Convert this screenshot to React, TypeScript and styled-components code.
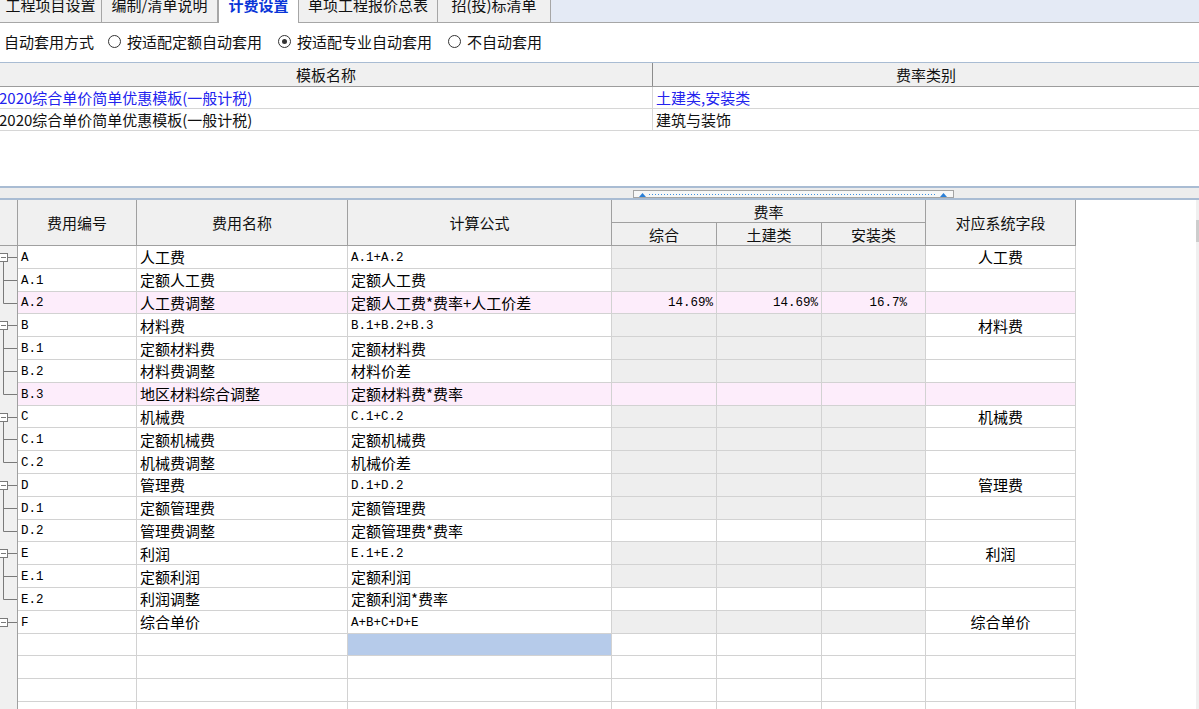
import React from 'react'
import styled, { createGlobalStyle } from 'styled-components'

const GlobalStyle = createGlobalStyle`
  html, body {
    margin: 0;
    padding: 0;
    background: #ffffff;
    overflow: hidden;
  }
  body {
    font-family: "Noto Sans CJK SC", "Liberation Sans", sans-serif;
    font-size: 15px;
    color: #000;
  }
`

const MONO = '"Liberation Mono", "Noto Sans CJK SC", monospace'

type TreeKind = 'parent' | 'leaf' | 'child' | 'last' | 'none'

interface IRow {
  code: string
  name: string
  formula: string
  rates?: [string, string, string]
  field?: string
  tree: TreeKind
  tone: 'gray' | 'pink' | 'white'
}

const rows: IRow[] = [
  { code: 'A', name: '人工费', formula: 'A.1+A.2', field: '人工费', tree: 'parent', tone: 'gray' },
  { code: 'A.1', name: '定额人工费', formula: '定额人工费', tree: 'child', tone: 'gray' },
  {
    code: 'A.2',
    name: '人工费调整',
    formula: '定额人工费*费率+人工价差',
    rates: ['14.69%', '14.69%', '16.7%  '],
    tree: 'last',
    tone: 'pink'
  },
  { code: 'B', name: '材料费', formula: 'B.1+B.2+B.3', field: '材料费', tree: 'parent', tone: 'gray' },
  { code: 'B.1', name: '定额材料费', formula: '定额材料费', tree: 'child', tone: 'gray' },
  { code: 'B.2', name: '材料费调整', formula: '材料价差', tree: 'child', tone: 'gray' },
  { code: 'B.3', name: '地区材料综合调整', formula: '定额材料费*费率', tree: 'last', tone: 'pink' },
  { code: 'C', name: '机械费', formula: 'C.1+C.2', field: '机械费', tree: 'parent', tone: 'gray' },
  { code: 'C.1', name: '定额机械费', formula: '定额机械费', tree: 'child', tone: 'gray' },
  { code: 'C.2', name: '机械费调整', formula: '机械价差', tree: 'last', tone: 'gray' },
  { code: 'D', name: '管理费', formula: 'D.1+D.2', field: '管理费', tree: 'parent', tone: 'gray' },
  { code: 'D.1', name: '定额管理费', formula: '定额管理费', tree: 'child', tone: 'gray' },
  { code: 'D.2', name: '管理费调整', formula: '定额管理费*费率', tree: 'last', tone: 'white' },
  { code: 'E', name: '利润', formula: 'E.1+E.2', field: '利润', tree: 'parent', tone: 'gray' },
  { code: 'E.1', name: '定额利润', formula: '定额利润', tree: 'child', tone: 'gray' },
  { code: 'E.2', name: '利润调整', formula: '定额利润*费率', tree: 'last', tone: 'white' },
  { code: 'F', name: '综合单价', formula: 'A+B+C+D+E', field: '综合单价', tree: 'leaf', tone: 'gray' }
]

const isAscii = (s: string) => /^[\x20-\x7e]*$/.test(s)

const COLS = '18px 119px 211px 264px 105px 105px 104px 150px'

const Page = styled.div`
  width: 1199px;
  height: 709px;
  display: flex;
  flex-direction: column;
  overflow: hidden;
`

const TabBar = styled.div`
  height: 22px;
  flex-shrink: 0;
  display: flex;
  background: #e4eaf5;
  border-bottom: 1px solid #a6a6a6;
`

const Tab = styled.div<{ $w: number; $active?: boolean }>`
  width: ${p => p.$w}px;
  height: ${p => (p.$active ? 23 : 22)}px;
  margin-bottom: ${p => (p.$active ? -1 : 0)}px;
  box-sizing: border-box;
  overflow: hidden;
  background: ${p => (p.$active ? '#ffffff' : '#f0f0f0')};
  border-right: 1px solid #a6a6a6;
  border-left: ${p => (p.$active ? '1px solid #a6a6a6' : 'none')};
  text-align: center;
  font-size: 15px;
  line-height: 16px;
  color: ${p => (p.$active ? '#0a36d8' : '#111')};
  font-weight: ${p => (p.$active ? 700 : 400)};
  span {
    display: block;
    margin-top: -3px;
  }
`

const ModeRow = styled.div`
  height: 39px;
  flex-shrink: 0;
  display: flex;
  align-items: center;
  padding-left: 4px;
  padding-bottom: 2px;
  box-sizing: border-box;
  font-size: 15px;
  color: #111;
`

const ModeLabel = styled.span`
  margin-right: 14px;
`

const Radio = styled.label`
  display: flex;
  align-items: center;
  margin-right: 16px;
`

const RadioDot = styled.span<{ $on?: boolean }>`
  width: 13px;
  height: 13px;
  box-sizing: border-box;
  border: 1px solid #333;
  border-radius: 50%;
  background: #fff;
  margin-right: 6px;
  display: flex;
  align-items: center;
  justify-content: center;
  &::after {
    content: '';
    width: 5px;
    height: 5px;
    border-radius: 50%;
    background: ${p => (p.$on ? '#333' : 'transparent')};
  }
`

const TemplatePanel = styled.div`
  height: 123px;
  flex-shrink: 0;
  border-top: 1px solid #a9bcd3;
  background: #fff;
`

const TemplateRow = styled.div<{ $head?: boolean }>`
  display: grid;
  grid-template-columns: 653px 1fr;
  height: ${p => (p.$head ? 24 : 22)}px;
  box-sizing: border-box;
  background: ${p => (p.$head ? '#f0f0f0' : '#fff')};
  border-bottom: 1px solid ${p => (p.$head ? '#9c9c9c' : '#d6d6d6')};
`

const TemplateCell = styled.div<{ $head?: boolean; $blue?: boolean; $pad?: number }>`
  display: flex;
  align-items: center;
  justify-content: ${p => (p.$head ? 'center' : 'flex-start')};
  padding-left: ${p => p.$pad ?? 0}px;
  box-sizing: border-box;
  white-space: nowrap;
  overflow: hidden;
  color: ${p => (p.$blue ? '#2323ee' : '#111')};
  &:first-child {
    border-right: 1px solid ${p => (p.$head ? '#8c8c8c' : '#d6d6d6')};
    margin-left: ${p => (p.$head ? 0 : -1)}px;
  }
`

const Splitter = styled.div`
  height: 14px;
  flex-shrink: 0;
  box-sizing: border-box;
  background: #ededed;
  border-top: 2px solid #a9bcd3;
  border-bottom: 2px solid #a9bcd3;
  display: flex;
  align-items: flex-end;
  padding-left: 633px;
`

const Lower = styled.div`
  flex: 1;
  display: flex;
  min-height: 0;
`

const Grid = styled.div`
  width: 1076px;
  display: flex;
  flex-direction: column;
`

const Spacer = styled.div`
  flex: 1;
`

const ScrollTrack = styled.div`
  width: 3px;
  background: #f0f0f0;
  padding-top: 20px;
  &::before {
    content: '';
    display: block;
    height: 22px;
    background: #cdcdcd;
  }
`

const HeadGrid = styled.div`
  display: grid;
  grid-template-columns: ${COLS};
  grid-template-rows: 23px 23px;
  background: #f0f0f0;
`

const HeadCell = styled.div<{ $col: string; $row: string }>`
  grid-column: ${p => p.$col};
  grid-row: ${p => p.$row};
  display: flex;
  align-items: center;
  justify-content: center;
  border-right: 1px solid #a0a0a0;
  border-bottom: 1px solid #a0a0a0;
  color: #111;
  white-space: nowrap;
`

const DataRow = styled.div`
  display: grid;
  grid-template-columns: ${COLS};
  height: 22.8px;
  flex-shrink: 0;
`

const TreeCell = styled.div`
  background: #f0f0f0;
  border-right: 1px solid #a0a0a0;
  overflow: hidden;
`

const Cell = styled.div<{ $bg: string; $align?: 'left' | 'right' | 'center'; $mono?: boolean }>`
  background: ${p => p.$bg};
  border-right: 1px solid #d2d2d2;
  border-bottom: 1px solid #d2d2d2;
  box-sizing: border-box;
  display: flex;
  align-items: center;
  justify-content: ${p =>
    p.$align === 'right' ? 'flex-end' : p.$align === 'center' ? 'center' : 'flex-start'};
  padding: ${p => (p.$mono ? '2px 3px 0' : '0 3px')};
  white-space: pre;
  overflow: hidden;
  font-family: ${p => (p.$mono ? MONO : 'inherit')};
  font-size: ${p => (p.$mono ? '12.5px' : '15px')};
  color: #000;
`

const SplitHandle = () => (
  <svg width="321" height="8" style={{ display: 'block' }}>
    <rect x="0.5" y="0.5" width="320" height="7" fill="#f7f7f7" stroke="#a4a4a4" />
    <line x1="16" y1="4.5" x2="304" y2="4.5" stroke="#3b8ee0" strokeWidth="1" strokeDasharray="1 2" />
    <path d="M6 7 L9.5 3 L13 7 Z" fill="#2a7fd8" />
    <path d="M307 7 L310.5 3 L314 7 Z" fill="#2a7fd8" />
  </svg>
)

const TreeMark = ({ kind }: { kind: TreeKind }) => {
  if (kind === 'none') return null
  const c = '#7a7a7a'
  return (
    <svg width="18" height="24" style={{ display: 'block' }}>
      {(kind === 'parent' || kind === 'leaf') && (
        <>
          <rect x="-0.5" y="7.5" width="8" height="8" fill="#fff" stroke={c} />
          <line x1="1" y1="11.5" x2="6" y2="11.5" stroke={c} />
          <line x1="8" y1="11.5" x2="18" y2="11.5" stroke={c} />
          {kind === 'parent' && <line x1="3.5" y1="16" x2="3.5" y2="24" stroke={c} />}
        </>
      )}
      {(kind === 'child' || kind === 'last') && (
        <>
          <line x1="3.5" y1="0" x2="3.5" y2={kind === 'child' ? 24 : 11.5} stroke={c} />
          <line x1="3.5" y1="11.5" x2="18" y2="11.5" stroke={c} />
        </>
      )}
    </svg>
  )
}

const toneBg = (tone: IRow['tone']) => (tone === 'pink' ? '#fdedfb' : tone === 'gray' ? '#eeeeee' : '#ffffff')

export default function App() {
  const tabs = [
    { label: '工程项目设置', w: 102 },
    { label: '编制/清单说明', w: 116 },
    { label: '计费设置', w: 81, active: true },
    { label: '单项工程报价总表', w: 139 },
    { label: '招(投)标清单', w: 113 }
  ]

  return (
    <Page>
      <GlobalStyle />
      <TabBar>
        {tabs.map(t => (
          <Tab key={t.label} $w={t.w} $active={t.active}>
            <span>{t.label}</span>
          </Tab>
        ))}
      </TabBar>

      <ModeRow>
        <ModeLabel>自动套用方式</ModeLabel>
        <Radio>
          <RadioDot />
          按适配定额自动套用
        </Radio>
        <Radio>
          <RadioDot $on />
          按适配专业自动套用
        </Radio>
        <Radio>
          <RadioDot />
          不自动套用
        </Radio>
      </ModeRow>

      <TemplatePanel>
        <TemplateRow $head>
          <TemplateCell $head>模板名称</TemplateCell>
          <TemplateCell $head>费率类别</TemplateCell>
        </TemplateRow>
        <TemplateRow>
          <TemplateCell $blue>2020综合单价简单优惠模板(一般计税)</TemplateCell>
          <TemplateCell $blue $pad={3}>土建类,安装类</TemplateCell>
        </TemplateRow>
        <TemplateRow>
          <TemplateCell>2020综合单价简单优惠模板(一般计税)</TemplateCell>
          <TemplateCell $pad={3}>建筑与装饰</TemplateCell>
        </TemplateRow>
      </TemplatePanel>

      <Splitter>
        <SplitHandle />
      </Splitter>

      <Lower>
        <Grid>
          <HeadGrid>
            <HeadCell $col="1" $row="1 / 3" />
            <HeadCell $col="2" $row="1 / 3">费用编号</HeadCell>
            <HeadCell $col="3" $row="1 / 3">费用名称</HeadCell>
            <HeadCell $col="4" $row="1 / 3">计算公式</HeadCell>
            <HeadCell $col="5 / 8" $row="1">费率</HeadCell>
            <HeadCell $col="5" $row="2">综合</HeadCell>
            <HeadCell $col="6" $row="2">土建类</HeadCell>
            <HeadCell $col="7" $row="2">安装类</HeadCell>
            <HeadCell $col="8" $row="1 / 3">对应系统字段</HeadCell>
          </HeadGrid>

          {rows.map(r => {
            const bg = toneBg(r.tone)
            const lineBg = r.tone === 'pink' ? '#fdedfb' : '#ffffff'
            return (
              <DataRow key={r.code}>
                <TreeCell>
                  <TreeMark kind={r.tree} />
                </TreeCell>
                <Cell $bg={lineBg} $mono>{r.code}</Cell>
                <Cell $bg={lineBg}>{r.name}</Cell>
                <Cell $bg={lineBg} $mono={isAscii(r.formula)}>{r.formula}</Cell>
                {[0, 1, 2].map(i => (
                  <Cell key={i} $bg={bg} $align="right" $mono>
                    {r.rates ? r.rates[i] : ''}
                  </Cell>
                ))}
                <Cell $bg={lineBg} $align="center">{r.field ?? ''}</Cell>
              </DataRow>
            )
          })}

          {[0, 1, 2, 3, 4].map(i => (
            <DataRow key={'empty' + i}>
              <TreeCell />
              <Cell $bg="#fff" />
              <Cell $bg="#fff" />
              <Cell $bg={i === 0 ? '#b6cbea' : '#fff'} />
              <Cell $bg="#fff" />
              <Cell $bg="#fff" />
              <Cell $bg="#fff" />
              <Cell $bg="#fff" />
            </DataRow>
          ))}
        </Grid>
        <Spacer />
        <ScrollTrack />
      </Lower>
    </Page>
  )
}
